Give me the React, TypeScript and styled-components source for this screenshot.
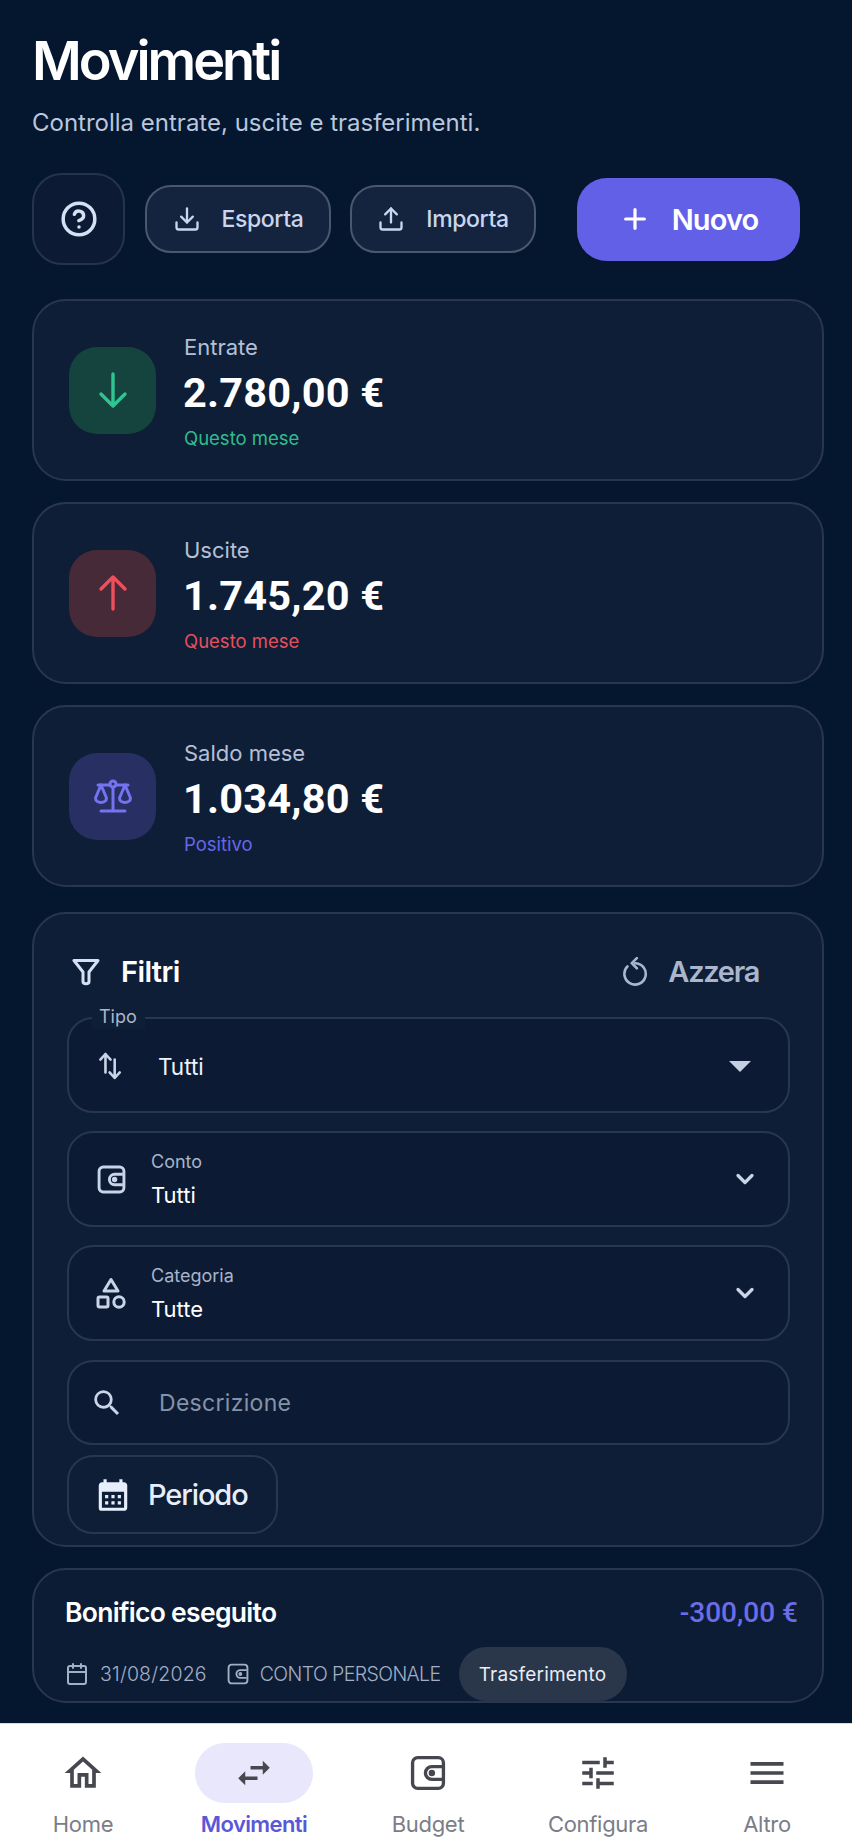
import React from "react";
import styled, { createGlobalStyle } from "styled-components";
import { CircleHelp, Download, Upload, Plus, ChevronDown, Calendar } from "lucide-react";
import { MdOutlineHome, MdSwapHoriz, MdTune, MdMenu, MdCalendarMonth, MdSearch } from "react-icons/md";

const Global = createGlobalStyle`
  html, body { margin: 0; padding: 0; background: #05162f; }
  * { box-sizing: border-box; }
  body { font-family: Inter, "Noto Sans", sans-serif; }
`;

const Screen = styled.div`
  width: 852px; height: 1847px; display: flex; flex-direction: column; overflow: hidden;
  background: #05162f;
`;
const Main = styled.main`
  flex: 1; padding: 33px 28px 0 32px; display: flex; flex-direction: column; min-height: 0;
`;
const Title = styled.h1`
  margin: 0; font-size: 54px; line-height: 56px; font-weight: 600; color: #fff; letter-spacing: -3px;
`;
const Subtitle = styled.p`
  margin: 19px 0 0; font-size: 24px; line-height: 30px; color: #b9c7de; font-weight: 400;
`;
const Toolbar = styled.div`
  margin-top: 35px; height: 92px; display: flex; align-items: center; gap: 19px;
`;
const HelpButton = styled.button`
  width: 93px; height: 92px; border-radius: 30px; background: #0c1b33; border: 2px solid #253449;
  color: #d5e0f5; display: flex; align-items: center; justify-content: center; padding: 0; margin-right: 1px;
`;
const GhostButton = styled.button`
  width: 186px; height: 68px; border-radius: 26px; background: #15243e; border: 2px solid #4a586e;
  color: #c9d6ee; display: flex; align-items: center; justify-content: center; gap: 21px;
  font: 500 23px Inter, sans-serif; letter-spacing: -0.4px; padding: 0;
`;
const PrimaryButton = styled.button`
  margin-left: 22px; width: 223px; height: 83px; border-radius: 30px; background: #6360e8; border: 0;
  color: #fff; display: flex; align-items: center; justify-content: center; gap: 21px;
  font: 600 29px Inter, sans-serif; letter-spacing: -0.9px; padding: 0;
`;
const Stats = styled.section`
  margin-top: 34px; display: flex; flex-direction: column; gap: 21px;
`;
const StatCard = styled.article`
  height: 182px; border-radius: 34px; border: 2px solid #28374d; background: #0e1e37;
  display: flex; align-items: center; gap: 28px; padding-left: 35px;
`;
const StatIcon = styled.div<{ $bg: string; $fg: string }>`
  width: 87px; height: 87px; border-radius: 28px; background: ${p => p.$bg}; color: ${p => p.$fg};
  display: flex; align-items: center; justify-content: center;
`;
const StatBody = styled.div`
  display: flex; flex-direction: column; padding-top: 2px;
`;
const StatLabel = styled.div`
  font-size: 22px; line-height: 28px; color: #b4c0d6;
`;
const StatValue = styled.div`
  font: 700 41.5px/50px Roboto, sans-serif; color: #fff; margin: 7px 0 0 -1px; letter-spacing: 0.2px;
`;
const StatNote = styled.div<{ $c: string }>`
  font-size: 18.5px; line-height: 24px; color: ${p => p.$c}; margin-top: 8px;
`;
const FilterCard = styled.section`
  margin-top: 25px; height: 635px; border-radius: 34px; border: 2px solid #28374d; background: #0e1e37;
  padding: 0 32px 0 33px; display: flex; flex-direction: column;
`;
const FilterHead = styled.header`
  height: 103px; flex: none; display: flex; align-items: center; justify-content: space-between;
  padding: 12px 31px 0 5px;
`;
const HeadLeft = styled.div`
  display: flex; align-items: center; gap: 21px; color: #fff; font-weight: 600; font-size: 29px; letter-spacing: -0.6px;
  svg { color: #d5e0f5; }
`;
const HeadRight = styled.div`
  display: flex; align-items: center; gap: 20px; color: #a9b6cd; font-weight: 600; font-size: 29px; letter-spacing: -1.3px;
`;
const Field = styled.div<{ $h?: number; $mt?: number; $pt?: number }>`
  position: relative; height: ${p => p.$h ?? 96}px; margin-top: ${p => p.$mt ?? 18}px; flex: none;
  border: 2px solid #28374d; border-radius: 26px; background: #0c1b33;
  display: flex; align-items: center; padding: ${p => p.$pt ?? 0}px 29px 0 25px; color: #c9d4e8;
`;
const Notch = styled.span`
  position: absolute; left: 23px; top: -14px; background: #0e1e37; padding: 0 8px 0 7px;
  font-size: 18px; line-height: 24px; color: #aab6cb;
`;
const IconSlot = styled.span`
  width: 34px; display: flex; justify-content: center; flex: none;
`;
const SearchSlot = styled.span`
  width: 34px; display: flex; justify-content: center; flex: none; margin-left: -4px; margin-right: 4px;
`;
const PlainValue = styled.span`
  margin-left: 30px; flex: 1; font-size: 22.5px; color: #eef2f9;
`;
const Placeholder = styled.span`
  margin-left: 31px; flex: 1; font-size: 23px; color: #8592a8; letter-spacing: 0.3px;
`;
const Stack = styled.span`
  margin-left: 23px; flex: 1; display: flex; flex-direction: column; gap: 7px;
`;
const SmallLabel = styled.span`
  font-size: 18px; line-height: 24px; color: #a8b4c9;
`;
const StackValue = styled.span`
  font-size: 22px; line-height: 28px; color: #fff;
`;
const Caret = styled.span`
  width: 0; height: 0; border-left: 11px solid transparent; border-right: 11px solid transparent;
  border-top: 11px solid #c5cfe2; margin-right: 8px;
`;
const PeriodButton = styled.button`
  margin-top: 10px; width: 211px; height: 79px; flex: none; border-radius: 26px; border: 2px solid #28374d;
  background: #0e1e37; color: #e7eefb; display: flex; align-items: center; gap: 16px; padding: 0 0 0 25px;
  font: 500 29px Inter, sans-serif; letter-spacing: -1.1px;
`;
const TxCard = styled.article`
  margin-top: 21px; height: 135px; border-radius: 34px; border: 2px solid #28374d; background: #0d1c35;
  padding: 0 24px 0 31px; display: flex; flex-direction: column;
`;
const TxTop = styled.div`
  flex: 1; display: flex; align-items: center; justify-content: space-between; padding-top: 6px;
`;
const TxTitle = styled.div`
  font-size: 26.5px; font-weight: 600; color: #fff; letter-spacing: -0.7px;
`;
const TxAmount = styled.div`
  font: 500 28px Roboto, sans-serif; color: #6a6ce8; margin-top: 2px;
`;
const TxMeta = styled.div`
  height: 54px; display: flex; align-items: center; color: #a3afc4; font-size: 19.5px; font-weight: 300;
`;
const MetaItem = styled.span`
  display: flex; align-items: center; gap: 11px; margin-right: 20px; white-space: nowrap;
`;
const DateText = styled.span`
  letter-spacing: 0.2px;
`;
const AccountText = styled.span`
  letter-spacing: -0.6px;
`;
const Chip = styled.span`
  height: 54px; width: 168px; border-radius: 27px; background: #2a3649; color: #e7ecf5; margin-left: -2px;
  display: flex; align-items: center; justify-content: center; font-size: 19px; font-weight: 400; letter-spacing: 0.2px;
`;
const Nav = styled.nav`
  height: 124px; flex: none; background: #fff; border-top: 1px solid #d7dbe2; display: grid;
  grid-template-columns: 166px 176px 172px 168px 170px;
`;
const NavItem = styled.div<{ $active?: boolean }>`
  display: flex; flex-direction: column; align-items: center; padding-top: 19px;
  color: ${p => (p.$active ? "#5b58d6" : "#7a7d88")};
  font-size: 22px; font-weight: ${p => (p.$active ? 600 : 400)}; letter-spacing: ${p => (p.$active ? "-0.6px" : "-0.3px")};
`;
const NavIcon = styled.span<{ $active?: boolean }>`
  width: 118px; height: 60px; border-radius: 30px; display: flex; align-items: center; justify-content: center;
  background: ${p => (p.$active ? "#e9e7fb" : "transparent")}; color: #46474f; margin-bottom: 7px;
`;
const NavLabel = styled.span`
  line-height: 28px;
`;

const Wallet = ({ size = 32, sw = 2.4 }: { size?: number; sw?: number }) => (
  <svg width={size} height={size} viewBox="0 0 28 28" fill="none" stroke="currentColor" strokeWidth={sw}>
    <rect x="2" y="2" width="24" height="24" rx="4" />
    <path d="M25 9H17a5 5 0 0 0 0 10h8" />
    <circle cx="17" cy="14" r="1.2" fill="currentColor" />
  </svg>
);
const LongArrow = ({ up }: { up?: boolean }) => (
  <svg width="30" height="38" viewBox="0 0 30 38" fill="none" stroke="currentColor" strokeWidth="3.4" strokeLinecap="round" strokeLinejoin="round">
    {up ? <path d="M15 35V3M3 15 15 3l12 12" /> : <path d="M15 3v32M3 23l12 12 12-12" />}
  </svg>
);
const FilterGlyph = () => (
  <svg width="28" height="28" viewBox="0 0 28 28" fill="none" stroke="currentColor" strokeWidth="3" strokeLinejoin="round">
    <path d="M2 2.500h24L17 14v9.500c0 3-6 3-6 0V14z" />
  </svg>
);
const SortGlyph = () => (
  <svg width="24" height="28" viewBox="0 0 26 30" fill="none" stroke="currentColor" strokeWidth="2.8" strokeLinecap="round" strokeLinejoin="round">
    <path d="M7 22V2M1.500 8 7 2l5.500 6" />
    <path d="M17 8v20M11.500 22l5.500 6 5.500-6" />
  </svg>
);
const ShapesGlyph = () => (
  <svg width="30" height="32" viewBox="0 0 30 32" fill="none" stroke="currentColor" strokeWidth="3" strokeLinejoin="round">
    <path d="M15 2.500 22 14H8z" />
    <rect x="2" y="20" width="10" height="10" rx="1.500" />
    <circle cx="23" cy="25" r="5.200" />
  </svg>
);
const ScaleGlyph = () => (
  <svg width="40" height="36" viewBox="0 0 40 36" fill="none" stroke="currentColor" strokeWidth="3" strokeLinecap="round" strokeLinejoin="round">
    <path d="M5 7h12M23 7h12M20 9v24M8 33h24" />
    <circle cx="20" cy="6" r="3" />
    <path d="M8 7 2.500 20c0 6 11 6 11 0z" />
    <path d="M32 7l-5.500 13c0 6 11 6 11 0z" />
  </svg>
);
const ResetGlyph = () => (
  <svg width="26" height="30" viewBox="0 0 28 32" fill="none" stroke="currentColor" strokeWidth="2.8" strokeLinecap="round" strokeLinejoin="round">
    <path d="M5.900 9.900A11.500 11.500 0 1 0 14 6.500" />
    <path d="M16 1l-5.500 5.500L16 12" />
  </svg>
);

const items = [
  { l: "Home", i: <MdOutlineHome size={44} /> },
  { l: "Movimenti", i: <MdSwapHoriz size={42} />, a: true },
  { l: "Budget", i: <Wallet size={36} sw={2.6} /> },
  { l: "Configura", i: <MdTune size={42} /> },
  { l: "Altro", i: <MdMenu size={44} /> },
];

export default function App() {
  return (
    <Screen>
      <Global />
      <Main>
        <Title>Movimenti</Title>
        <Subtitle>Controlla entrate, uscite e trasferimenti.</Subtitle>
        <Toolbar>
          <HelpButton><CircleHelp size={38} strokeWidth={2.2} /></HelpButton>
          <GhostButton><Download size={28} strokeWidth={2} />Esporta</GhostButton>
          <GhostButton><Upload size={28} strokeWidth={2} />Importa</GhostButton>
          <PrimaryButton><Plus size={32} strokeWidth={2.4} />Nuovo</PrimaryButton>
        </Toolbar>
        <Stats>
          <StatCard>
            <StatIcon $bg="#15443f" $fg="#2fc592"><LongArrow /></StatIcon>
            <StatBody>
              <StatLabel>Entrate</StatLabel>
              <StatValue>2.780,00 €</StatValue>
              <StatNote $c="#30bd8e">Questo mese</StatNote>
            </StatBody>
          </StatCard>
          <StatCard>
            <StatIcon $bg="#462a38" $fg="#ef4f5a"><LongArrow up /></StatIcon>
            <StatBody>
              <StatLabel>Uscite</StatLabel>
              <StatValue>1.745,20 €</StatValue>
              <StatNote $c="#e4505d">Questo mese</StatNote>
            </StatBody>
          </StatCard>
          <StatCard>
            <StatIcon $bg="#282f62" $fg="#7673f0"><ScaleGlyph /></StatIcon>
            <StatBody>
              <StatLabel>Saldo mese</StatLabel>
              <StatValue>1.034,80 €</StatValue>
              <StatNote $c="#6567e8">Positivo</StatNote>
            </StatBody>
          </StatCard>
        </Stats>
        <FilterCard>
          <FilterHead>
            <HeadLeft><FilterGlyph />Filtri</HeadLeft>
            <HeadRight><ResetGlyph />Azzera</HeadRight>
          </FilterHead>
          <Field $mt={0} $pt={2}>
            <Notch>Tipo</Notch>
            <IconSlot><SortGlyph /></IconSlot>
            <PlainValue>Tutti</PlainValue>
            <Caret />
          </Field>
          <Field>
            <IconSlot><Wallet size={29} sw={2.8} /></IconSlot>
            <Stack><SmallLabel>Conto</SmallLabel><StackValue>Tutti</StackValue></Stack>
            <ChevronDown size={28} strokeWidth={2.8} />
          </Field>
          <Field>
            <IconSlot><ShapesGlyph /></IconSlot>
            <Stack><SmallLabel>Categoria</SmallLabel><StackValue>Tutte</StackValue></Stack>
            <ChevronDown size={28} strokeWidth={2.8} />
          </Field>
          <Field $h={85} $mt={19}>
            <SearchSlot><MdSearch size={44} /></SearchSlot>
            <Placeholder>Descrizione</Placeholder>
          </Field>
          <PeriodButton><MdCalendarMonth size={38} />Periodo</PeriodButton>
        </FilterCard>
        <TxCard>
          <TxTop>
            <TxTitle>Bonifico eseguito</TxTitle>
            <TxAmount>-300,00 €</TxAmount>
          </TxTop>
          <TxMeta>
            <MetaItem><Calendar size={24} strokeWidth={2} /><DateText>31/08/2026</DateText></MetaItem>
            <MetaItem><Wallet size={22} sw={2.4} /><AccountText>CONTO PERSONALE</AccountText></MetaItem>
            <Chip>Trasferimento</Chip>
          </TxMeta>
        </TxCard>
      </Main>
      <Nav>
        {items.map(n => (
          <NavItem key={n.l} $active={n.a}>
            <NavIcon $active={n.a}>{n.i}</NavIcon>
            <NavLabel>{n.l}</NavLabel>
          </NavItem>
        ))}
      </Nav>
    </Screen>
  );
}
